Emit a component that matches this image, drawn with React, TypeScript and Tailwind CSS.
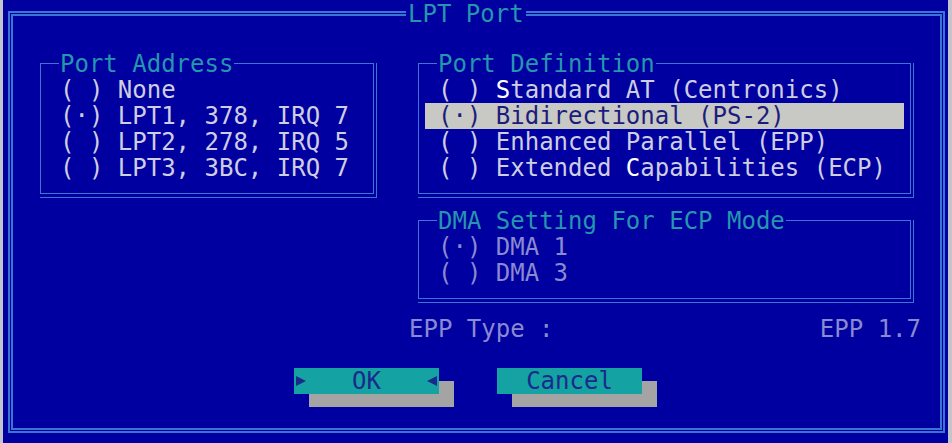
import type { ReactNode } from 'react';

// BIOS style "LPT Port" dialog

function GroupBox({ title, children, className = '' }: { title: string; children: ReactNode; className?: string }) {
  return (
    <div className={`border-r border-b border-[#3a74d4] pr-[2px] pb-[3px] ${className}`}>
      <div className="border border-[#3a74d4] pb-[12px]">
        <div className="-mt-[13px] ml-[18px] w-fit bg-[#0000a0] px-px text-[#2596ad]">{title}</div>
        {children}
      </div>
    </div>
  );
}

function Row({ checked, children, selected, dim }: { checked?: boolean; children: ReactNode; selected?: boolean; dim?: boolean }) {
  const color = selected ? 'bg-[#c8c8c4] text-[#1c1c7c]' : dim ? 'text-[#8a8ad0]' : 'text-[#cecee0]';
  return (
    <div className={`mx-[6px] h-[26px] whitespace-pre pl-[13px] ${color}`}>
      {checked ? '(·) ' : '( ) '}
      {children}
    </div>
  );
}

const Hot = ({ children }: { children: ReactNode }) => <span className="text-white">{children}</span>;

function Arrow({ left }: { left?: boolean }) {
  return (
    <svg width="10" height="10" viewBox="0 0 10 10" className="shrink-0">
      <path d={left ? 'M10 0 L0 5 L10 10 Z' : 'M0 0 L10 5 L0 10 Z'} fill="#1a2a8c" />
    </svg>
  );
}

export default function App() {
  return (
    <div className="flex h-[443px] w-[952px] overflow-hidden bg-[#0000a0] font-['DejaVu_Sans_Mono',monospace] text-[24px] leading-[26px]">
      <div className="w-[3px] bg-[#c4c4cc]" />
      <div className="flex-1 pl-[5px] pt-[11px]">
        <div className="h-[422px] w-[937px] border-2 border-[#3a74d4] p-px">
          <div className="h-full border-2 border-[#3a74d4]">
            <div className="-mt-[15px] ml-[393px] w-fit bg-[#0000a0] px-[2px] text-[#2596ad]">LPT Port</div>

            <div className="ml-[27px] mt-[36px] flex items-start">
              <GroupBox title="Port Address" className="w-[337px]">
                <Row>None</Row>
                <Row checked>LPT1, 378, IRQ 7</Row>
                <Row>LPT2, 278, IRQ 5</Row>
                <Row>LPT3, 3BC, IRQ 7</Row>
              </GroupBox>

              <div className="ml-[41px] flex w-[496px] flex-col">
                <GroupBox title="Port Definition">
                  <Row>
                    <Hot>S</Hot>tandard AT (Centronics)
                  </Row>
                  <Row checked selected>
                    Bidirectional (PS-2)
                  </Row>
                  <Row>Enhanced Parallel (EPP)</Row>
                  <Row>
                    Extended <Hot>C</Hot>apabilities (ECP)
                  </Row>
                </GroupBox>

                <GroupBox title="DMA Setting For ECP Mode" className="mt-[22px]">
                  <Row checked dim>
                    DMA 1
                  </Row>
                  <Row dim>DMA 3</Row>
                </GroupBox>

                <div className="-ml-[9px] -mr-[7px] mt-[13px] flex justify-between text-[#8a8ad0]">
                  <span>EPP Type :</span>
                  <span>EPP 1.7</span>
                </div>
              </div>
            </div>

            <div className="ml-[281px] mt-[26px] flex">
              <div className="flex h-[26px] w-[145px] items-center justify-between bg-[#14a2a2] px-[2px] text-[#1a2a8c] shadow-[15px_13px_0_0_#a4a4a4]">
                <Arrow />
                <span>OK</span>
                <Arrow left />
              </div>
              <div className="ml-[58px] flex h-[26px] w-[145px] items-center justify-center bg-[#14a2a2] text-[#1a2a8c] shadow-[15px_13px_0_0_#a4a4a4]">
                Cancel
              </div>
            </div>
          </div>
        </div>
      </div>
      <div className="w-[4px] bg-[#c4c4cc]" />
    </div>
  );
}
